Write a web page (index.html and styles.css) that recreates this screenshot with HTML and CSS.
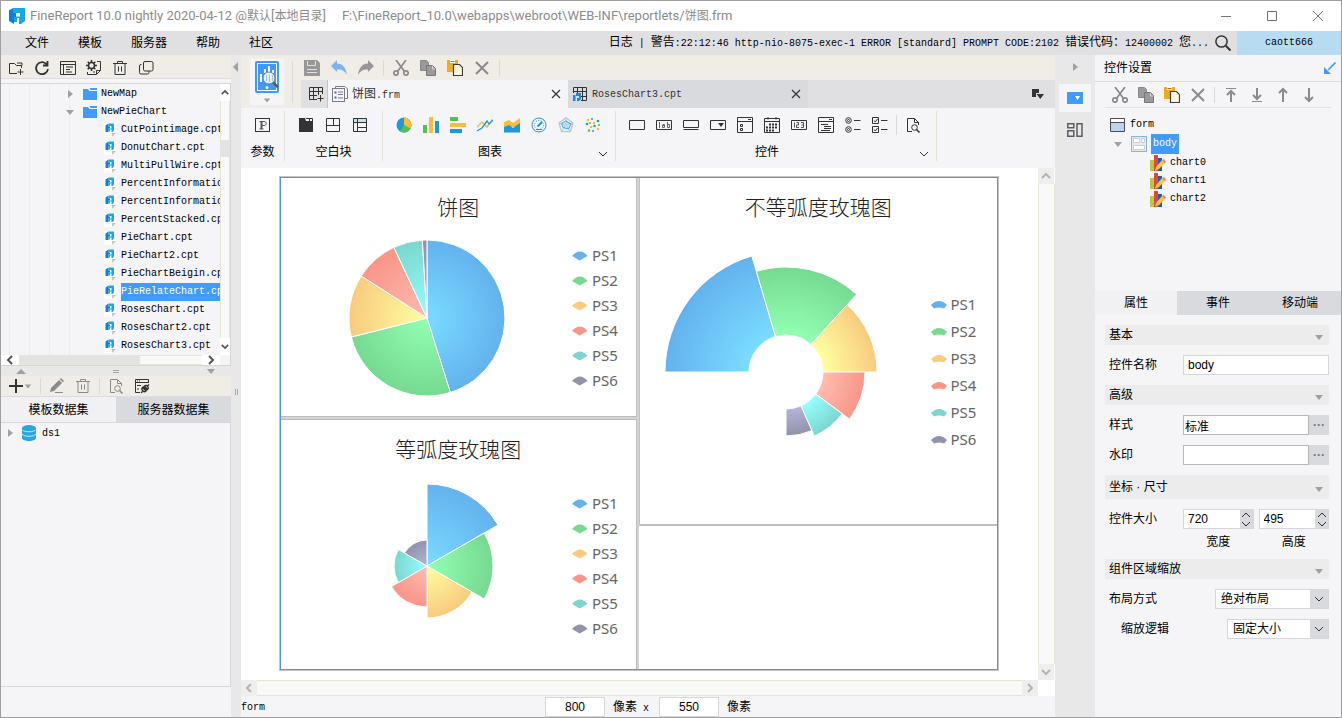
FILE: index.html
```html
<!DOCTYPE html>
<html lang="zh-CN">
<head>
  <meta charset="UTF-8" />
  <title>FineReport 10.0</title>
  <meta name="viewport" content="width=device-width, initial-scale=1" />
  <link rel="stylesheet" href="styles.css">
</head>
<body>
  <!-- icon sprite -->
  <svg class="sprite" aria-hidden="true">
    <symbol id="i-logo" viewBox="0 0 16 16"><g stroke="none"><path d="M0 2.500L4 0v5h3v4H5v7L0 13z" fill="#0d7fd6"/><path d="M4 0h12v13l-4 3h-2v-6H8v4H5V8.500h6V5H4z" fill="#16a9e6"/></g></symbol>
    <symbol id="i-folder-add" viewBox="0 0 16 16"><path d="M9 13.500H1.500v-10h5l2 2h5V8M9 3h5v2.500M12.500 9v6M9.500 12h6"/></symbol>
    <symbol id="i-refresh" viewBox="0 0 16 16"><path stroke-width="1.800" d="M12.800 4.500A6 6 0 1 0 14 9M13.500 1v4.500H9"/></symbol>
    <symbol id="i-listwin" viewBox="0 0 16 16"><path d="M.5 1.500h15v13H.5zM.5 4.500h15M3.500 4.500v10M6 7h7M6 9.500h4M6 12h6"/></symbol>
    <symbol id="i-gearpage" viewBox="0 0 16 16"><circle cx="5.500" cy="5.500" r="3" stroke-width="1.600"/><path stroke-width="1.600" d="M5.500 0v2M5.500 9v2M0 5.500h2M9 5.500h2M1.700 1.700l1.300 1.300M8 8l1.300 1.300M1.700 9.300L3 8M8 3l1.300-1.300"/><path d="M11 1.500h3.500v9M1.500 12v2.500H10M14.500 10.500h-4v4zM7 12h2"/></symbol>
    <symbol id="i-trash" viewBox="0 0 16 16"><path d="M1 3.500h14M5.500 3V1.500h5V3M3 3.500v11h10v-11M6.500 6.500v5M9.500 6.500v5"/></symbol>
    <symbol id="i-copy2" viewBox="0 0 16 16"><rect x="5.500" y="1.500" width="9.500" height="9.500" rx="1.500"/><path d="M3.500 4.500H3A1.500 1.500 0 0 0 1.500 6v6.500A1.500 1.500 0 0 0 3 14h6.500a1.500 1.500 0 0 0 1.500-1.500V11"/></symbol>
    <symbol id="i-plus" viewBox="0 0 16 16"><path stroke-width="2" d="M8 1v14M1 8h14"/></symbol>
    <symbol id="i-pencil" viewBox="0 0 16 16"><path fill="#8a8a8d" stroke="none" d="M1 14l1-4 8-8 3 3-8 8zM10.800 1.200L12 0l3 3-1.200 1.200z"/><path d="M6 14.500h8"/></symbol>
    <symbol id="i-pagesearch" viewBox="0 0 16 16"><path d="M7 14.500H2.500v-13h7l4 4V8M9.500 1.500v4h4"/><circle cx="9.500" cy="10.500" r="2.800"/><path stroke-width="1.600" d="M11.500 12.500l3 3"/></symbol>
    <symbol id="i-wintool" viewBox="0 0 16 16"><path d="M6 14.500H1.500v-13h13V5M1.500 4.500h13M3 3h1M5 3h1M3 7.500h4M3 11h2"/><path stroke-width="1.300" d="M9 8.500l4 4M8.500 9.500c-2 2 1.500 5.500 3.500 3.500zM10.500 8c2-2 5 1.500 3 3.500zM7 15l1.500-1.500M13.500 8L15 6.500"/></symbol>
    <symbol id="i-file" viewBox="0 0 12 16"><g stroke="none"><path fill="#fff" d="M0 1h12v10l-3 4H0z"/><path fill="#c4c4c8" d="M8 11h4l-4 4z"/><path fill="#0d7fd6" d="M1.500 3.500l3-2v3h1.500v2H4.500v3.500h-3z"/><path fill="#16a9e6" d="M4.500 1.500H10v7L8.500 10h-1V7.500H6v2H4.500V6.500h3V4h-3z"/></g></symbol>
    <symbol id="i-folder" viewBox="0 0 14 12"><path fill="#409bfb" stroke="none" d="M0 1h5l1.500 2H14v9H0zM6.500 0H14v2H7.500z"/></symbol>
    <symbol id="i-db" viewBox="0 0 14 16"><path fill="#29a5e3" stroke="none" d="M0 3v10c0 4 14 4 14 0V3z"/><ellipse cx="7" cy="3" rx="7" ry="3" fill="#29a5e3" stroke="none"/><path stroke="#c7e8f7" d="M0 4.500c1.500 3 12.500 3 14 0M0 9c1.500 3 12.500 3 14 0"/></symbol>
    <symbol id="i-save" viewBox="0 0 16 16"><path fill="#97979a" stroke="none" d="M0 0h13l3 3v13H0z"/><path stroke="#e2e0da" d="M3.500 1v4.500h8V1M3 9.500h10M3 12.500h10"/></symbol>
    <symbol id="i-undo" viewBox="0 0 16 16"><path fill="#7db4f0" stroke="none" d="M0 6l6-6v3.500c6 0 9 4.500 10 11.500-2-4-5-6-10-5.500V12z"/></symbol>
    <symbol id="i-redo" viewBox="0 0 16 16"><path fill="#97979a" stroke="none" d="M16 6l-6-6v3.500C4 3.500 1 8 0 15c2-4 5-6 10-5.500V12z"/></symbol>
    <symbol id="i-cut" viewBox="0 0 16 16"><g stroke="#8a8a8d" stroke-width="1.700"><circle cx="3" cy="13" r="2.200"/><circle cx="13" cy="13" r="2.200"/><path d="M3 0l8.500 11.500M13 0L4.500 11.500"/></g></symbol>
    <symbol id="i-copy" viewBox="0 0 16 16"><path fill="#9a9a9d" stroke="#88888b" d="M.5.500h6l2 2v8h-8z"/><path fill="#9a9a9d" stroke="#77777a" d="M6.500 5.500h6l3 3v7h-9z"/><path stroke="#d5d5d5" d="M12.500 6v3H15"/></symbol>
    <symbol id="i-paste" viewBox="0 0 16 16"><path fill="#f2ab1a" stroke="none" d="M0 0h11v5H6v7H0z"/><path fill="#fff" stroke="none" d="M3 0h5v3H3z"/><path stroke="#d65a1e" d="M3.500 1.500h4"/><path fill="#fff6dc" stroke="#3c3c40" stroke-width="1.200" d="M6.500 4.500h6l3 3v8h-9z"/></symbol>
    <symbol id="i-x" viewBox="0 0 16 16"><path stroke-width="2" d="M2 2l12 12M14 2L2 14"/></symbol>
    <symbol id="i-xs" viewBox="0 0 16 16"><path stroke-width="1.200" d="M4 4l8 8M12 4l-8 8"/></symbol>
    <symbol id="i-tableadd" viewBox="0 0 16 16"><path d="M14.500 8V1.500h-13v12H9M1.500 5.500h13M1.500 9.500H9M5.500 1.500v12M10.500 1.500V9M12.500 9v6.500M9.500 12.500h6"/></symbol>
    <symbol id="i-frm" viewBox="0 0 16 16"><g stroke="#7c7c80"><path d="M3.500 2.500v-2H13L15.500 3v9.500h-3"/><rect x=".5" y="2.500" width="12" height="13" fill="#f5f5f7"/><path d="M6 6h5M6 8.500h5M6 12h5"/></g><path fill="#2478c8" stroke="none" d="M2.500 5.500h2v2h-2zM2.500 10.500h2v2h-2z"/></symbol>
    <symbol id="i-cpt" viewBox="0 0 16 16"><path d="M1.500 7V1.500h13v13H9M1.500 5.500h13M9 10.500h5.500M5.500 1.500V7M10.500 1.500v13"/><path fill="#1a8ad8" stroke="none" d="M1 9h2.500v6H1zM4 7h5v6l-2 2H5v-3h2v-2H4z"/></symbol>
    <symbol id="i-tabmenu" viewBox="0 0 12 12"><path fill="#333" stroke="none" d="M0 1h7v4H4v4H0zM4.500 6H12l-3.700 5z"/></symbol>
    <symbol id="i-chev" viewBox="0 0 10 10"><path d="M1 3l4 4 4-4"/></symbol>
    <symbol id="i-chev-up" viewBox="0 0 10 10"><path d="M1 7l4-4 4 4"/></symbol>
    <symbol id="i-chev-left" viewBox="0 0 10 10"><path d="M7 1L3 5l4 4"/></symbol>
    <symbol id="i-chev-right" viewBox="0 0 10 10"><path d="M3 1l4 4-4 4"/></symbol>
    <symbol id="i-tri-down" viewBox="0 0 10 10"><path fill="#a0a0a3" stroke="none" d="M1 3h8L5 8z"/></symbol>
    <symbol id="i-tri-up" viewBox="0 0 10 10"><path fill="#a0a0a3" stroke="none" d="M0 8h10L5 3z"/></symbol>
    <symbol id="i-tri-right" viewBox="0 0 10 10"><path fill="#a0a0a3" stroke="none" d="M3 1v8l5-4z"/></symbol>
    <symbol id="i-tri-left" viewBox="0 0 10 10"><path fill="#a0a0a3" stroke="none" d="M7 0v10L2 5z"/></symbol>
    <symbol id="i-search" viewBox="0 0 16 16"><circle cx="6.500" cy="6.500" r="5.600" stroke-width="1.500"/><path stroke-width="2" d="M10.800 10.800l4.700 4.700"/></symbol>
    <symbol id="i-preview" viewBox="0 0 24 32"><rect width="24" height="32" rx="2" fill="#3f99fa" stroke="none"/><rect x="2.500" y="2.500" width="19" height="27" stroke="#fff"/><path stroke="#fff" stroke-width="2" d="M6 21v-8M10 12V8M14 11V5M18 12V9"/><circle cx="14" cy="17" r="6" fill="#e7f0f8" stroke="#707f8c"/><path stroke="#9cc6f2" d="M11.500 14v6M14.500 13v8M17.500 14v6"/><path stroke="#555" stroke-width="2.500" d="M18.500 21.500l4.500 5"/><circle cx="12" cy="26.500" r="1.500" fill="#fff" stroke="none"/></symbol>
    <!-- ribbon -->
    <symbol id="i-param" viewBox="0 0 16 16"><rect x=".5" y="1.500" width="14" height="13"/><path stroke="#555" d="M4.500 4.500h4.500c3 0 3 4 0 4H6.500M4.500 12h4"/><path stroke="#555" stroke-width="2" d="M6.500 4.500V12"/></symbol>
    <symbol id="i-block1" viewBox="0 0 16 16"><path fill="#333" stroke="none" d="M1 1h6l1 3h7v11H1z"/><path d="M8 1.500h6.500V5M11.500 1.500V4"/></symbol>
    <symbol id="i-block2" viewBox="0 0 16 16"><path d="M1.500 1.500h13v13h-13zM1.500 8.500h13M8.500 1.500v7"/></symbol>
    <symbol id="i-block3" viewBox="0 0 16 16"><path fill="#bfe4f7" stroke="none" d="M1 1h14v5H1z"/><path d="M1.500 1.500h13v13h-13zM1.500 5.500h13M5.500 1.500v13M5.500 10.500h9"/></symbol>
    <symbol id="i-c-pie" viewBox="0 0 16 16"><g stroke="none"><circle cx="8" cy="8" r="7.500" fill="#1f96e0"/><path fill="#f9bd3b" d="M8 8V.5A7.500 7.500 0 0 1 14.500 11.700z"/><path fill="#51c34e" d="M8 8l6.500 3.700A7.500 7.500 0 0 1 4 14.300z"/></g></symbol>
    <symbol id="i-c-bar" viewBox="0 0 16 16"><g stroke="none"><path fill="#51c34e" d="M0 8h4v8H0z"/><path fill="#f9bd3b" d="M6 0h4v16H6z"/><path fill="#1f96e0" d="M12 4h4v12h-4z"/></g></symbol>
    <symbol id="i-c-hbar" viewBox="0 0 16 16"><g stroke="none"><path fill="#51c34e" d="M0 0h8v4H0z"/><path fill="#f9bd3b" d="M0 6h16v4H0z"/><path fill="#1f96e0" d="M0 12h12v4H0z"/></g></symbol>
    <symbol id="i-c-line" viewBox="0 0 16 16"><path stroke="#f9bd3b" stroke-width="1.500" d="M0 10l5-5 5 5 5.500-7.500"/><path stroke="#1f96e0" stroke-width="1.300" d="M0 14l5-3 5-7 2 3 4-4"/></symbol>
    <symbol id="i-c-area" viewBox="0 0 16 16"><g stroke="none"><path fill="#f9bd3b" d="M0 5l5-2 4 3 7-5v9H0z"/><path fill="#1f96e0" d="M0 10l5-2 4 3 7-5v9.500H0z"/></g></symbol>
    <symbol id="i-c-gauge" viewBox="0 0 16 16"><g stroke="#1f96e0"><circle cx="8" cy="8" r="7"/><circle cx="8" cy="8" r="4.500" stroke-dasharray="1 1.500"/><path stroke-width="2" d="M6.500 9.500L11 5"/><path d="M5 12.500h6"/></g></symbol>
    <symbol id="i-c-radar" viewBox="0 0 16 16"><g stroke="#bcc6cd"><path stroke-width="1.300" d="M8 .8l7 5.200-2.600 8.500H3.600L1 6z"/><path d="M8 3.500L12 7M8 .8v7M1 6l7 2 7-2M3.600 14.500L8 8l4.400 6.500"/></g><path fill="#a6d8f5" fill-opacity=".6" stroke="#36a4e6" d="M7.500 4L13 7l-2.500 5L5 10.500 3.500 6.500z"/></symbol>
    <symbol id="i-c-scatter" viewBox="0 0 16 16"><g stroke="none"><g fill="#f9bd3b"><circle cx="3" cy="3" r="1.300"/><circle cx="9" cy="6" r="1.300"/><circle cx="6" cy="10" r="1.300"/><circle cx="13" cy="12" r="1.300"/></g><g fill="#1f96e0"><circle cx="7" cy="2" r="1"/><circle cx="13" cy="4" r="1.300"/><circle cx="9.500" cy="9" r="1.300"/><circle cx="2" cy="7" r="1.300"/><circle cx="8" cy="14" r="1"/></g><g fill="#51c34e"><circle cx="4" cy="13.500" r="1.300"/><circle cx="14" cy="8" r="1"/><circle cx="5" cy="6" r="1"/></g></g></symbol>
    <symbol id="i-w-text" viewBox="0 0 16 16"><path d="M.5 3.500h15v9H.5z"/></symbol>
    <symbol id="i-w-label" viewBox="0 0 16 16"><path d="M.5 3.500h15v9H.5z"/><path stroke="#666" d="M3.500 5v6M8.500 8.500h-2v2h2v-3h-2M11.500 5v5.500h2v-3h-2"/></symbol>
    <symbol id="i-w-button" viewBox="0 0 16 16"><path d="M.5 3.500h15v7H.5zM.5 12.500h15"/></symbol>
    <symbol id="i-w-combo" viewBox="0 0 16 16"><path d="M.5 3.500h15v9H.5z"/><path fill="#333" stroke="none" d="M8 6h6l-3 4z"/></symbol>
    <symbol id="i-w-checkcombo" viewBox="0 0 16 16"><path d="M.5.500h15v15H.5zM.5 4.500h15M3.500 7.500h2v2h-2zM3.500 11.500h2v2h-2zM11 2.500h3"/></symbol>
    <symbol id="i-w-date" viewBox="0 0 16 16"><path d="M.5 1.500h15v14H.5zM.5 4.500h15M4 0v2.500M12 0v2.500"/><path stroke-width="2" stroke-dasharray="2 1" d="M5 7.500h8M2 10.500h11M2 13.500h8"/></symbol>
    <symbol id="i-w-num" viewBox="0 0 16 16"><path d="M.5 3.500h15v9H.5z"/><path stroke="#555" d="M3.500 5.500v5M5.500 5.500h2V8h-2v2.500H8M10 5.500h2.500v5H10M10.500 8H13"/></symbol>
    <symbol id="i-w-tree" viewBox="0 0 16 16"><path d="M.5.500h15v15H.5zM.5 4.500h15M3 7.500h7M6 9.500h7M6 11.500h7M3 13.500h9M11 2.500h3"/></symbol>
    <symbol id="i-w-radio" viewBox="0 0 16 16"><circle cx="3.500" cy="3.500" r="2.800"/><circle cx="3.500" cy="12.500" r="2.800"/><circle cx="3.500" cy="3.500" r="1"/><circle cx="3.500" cy="12.500" r="1"/><path d="M9 3.500h6.500M9 12.500h6.500"/></symbol>
    <symbol id="i-w-check" viewBox="0 0 16 16"><path d="M.5.500h6v6h-6zM.5 9.500h6v6h-6zM2 3.500l1.300 1.500L5.500 2M2 12.500L3.300 14l2.200-3M9 3.500h6.500M9 12.500h6.500"/></symbol>
    <!-- right side -->
    <symbol id="i-props" viewBox="0 0 16 12"><path fill="#409bfb" stroke="none" d="M0 0h16v12H0z"/><path fill="#fff" stroke="none" d="M8 4h5l-2.500 4z"/></symbol>
    <symbol id="i-lib" viewBox="0 0 16 14"><path stroke="#5c5c66" stroke-width="1.500" d="M.8.800h6v4h-6zM.8 7.800h6v5.400h-6zM10 .8h5v12.400h-5z"/></symbol>
    <symbol id="i-popin" viewBox="0 0 12 12"><path stroke="#409bfb" stroke-width="1.600" d="M11.500.5L4 8"/><path fill="#409bfb" stroke="none" d="M0 5l7 7H0z"/></symbol>
    <symbol id="i-top" viewBox="0 0 16 16"><path stroke="#8a8a8d" d="M3 1.500h10"/><path stroke="#8a8a8d" stroke-width="2" d="M8 15V4M4 8l4-4 4 4"/></symbol>
    <symbol id="i-bottom" viewBox="0 0 16 16"><path stroke="#8a8a8d" d="M3 14.500h10"/><path stroke="#8a8a8d" stroke-width="2" d="M8 1v11M4 8l4 4 4-4"/></symbol>
    <symbol id="i-up" viewBox="0 0 16 16"><path stroke="#8a8a8d" stroke-width="2" d="M8 15V2M4 6l4-4 4 4"/></symbol>
    <symbol id="i-down" viewBox="0 0 16 16"><path stroke="#8a8a8d" stroke-width="2" d="M8 1v13M4 10l4 4 4-4"/></symbol>
    <symbol id="i-form" viewBox="0 0 16 16"><path fill="#bcd3f2" stroke="#4c4c55" d="M.5 1.500h14v13H.5z"/><path fill="#fff" stroke="#4c4c55" d="M.5 1.500h14v4H.5z"/></symbol>
    <symbol id="i-body" viewBox="0 0 16 16"><path fill="#e9e9ec" stroke="#84b4d4" d="M.5.500h15v15H.5z"/><path fill="#fff" stroke="#cfcfd2" d="M2.500 2.500h6v4h-6zM10.500 2.500h3v4h-3zM2.500 9.500h11v4h-11z"/></symbol>
    <symbol id="i-chart" viewBox="0 0 16 16"><g stroke="none"><path fill="#b2cc4a" d="M0 5h4v11H0z"/><path fill="#ea4138" d="M4 0h4v16H4z"/><path fill="#0f66a8" d="M8 3h4v13H8z"/><path fill="#fbc252" d="M6 12l6-7 3 3-6 6-4 2z"/><path fill="#ec7b5b" d="M12 5l2-1 2 3-1.500 1z"/></g></symbol>
    <!-- legend marks -->
    <symbol id="i-fan" viewBox="0 0 16 10"><path stroke="none" d="M0 5Q8-4 15.500 5L7.700 9.500z"/></symbol>
    <symbol id="i-arc" viewBox="0 0 16 10"><path stroke="none" d="M0 5Q8-3 16 5l-3 3.500Q8 6.500 3 8.500z"/></symbol>
  </svg>

  <div class="window">
    <header class="titlebar">
      <svg class="icon logo"><use href="#i-logo"/></svg>
      <span class="title">FineReport 10.0 nightly 2020-04-12 @<span class="zh">默认</span>[<span class="zh">本地目录</span>]</span>
      <span class="path">F:\FineReport_10.0\webapps\webroot\WEB-INF\reportlets/<span class="zh">饼图</span>.frm</span>
      <div class="win-buttons">
        <button aria-label="最小化"><svg viewBox="0 0 10 10"><path d="M0 5.500h10"/></svg></button>
        <button aria-label="最大化"><svg viewBox="0 0 10 10"><path d="M.5.500h9v9h-9z"/></svg></button>
        <button aria-label="关闭"><svg viewBox="0 0 10 10"><path d="M0 0l10 10M10 0L0 10"/></svg></button>
      </div>
    </header>

    <nav class="menubar">
      <button>文件</button>
      <button>模板</button>
      <button>服务器</button>
      <button>帮助</button>
      <button>社区</button>
      <span class="log mono"><span class="zh">日志</span> | <span class="zh">警告</span>:22:12:46 http-nio-8075-exec-1 ERROR [standard] PROMPT CODE:2102 <span class="zh">错误代码：</span>12400002 <span class="zh">您</span>...</span>
      <button class="search" aria-label="搜索"><svg class="icon"><use href="#i-search"/></svg></button>
      <button class="user mono">caott666</button>
    </nav>

    <div class="main">
      <aside class="left">
        <div class="toolbar files-toolbar">
          <button aria-label="新建文件夹"><svg class="icon"><use href="#i-folder-add"/></svg></button>
          <button aria-label="刷新"><svg class="icon"><use href="#i-refresh"/></svg></button>
          <button aria-label="打开所在位置"><svg class="icon"><use href="#i-listwin"/></svg></button>
          <button aria-label="重命名"><svg class="icon"><use href="#i-gearpage"/></svg></button>
          <button aria-label="删除"><svg class="icon"><use href="#i-trash"/></svg></button>
          <button aria-label="复制"><svg class="icon"><use href="#i-copy2"/></svg></button>
        </div>
        <div class="files">
          <ul class="tree mono">
            <li class="folder"><svg class="tri"><use href="#i-tri-right"/></svg><svg class="ficon"><use href="#i-folder"/></svg>NewMap</li>
            <li class="folder"><svg class="tri"><use href="#i-tri-down"/></svg><svg class="ficon"><use href="#i-folder"/></svg>NewPieChart</li>
            <li><svg class="file"><use href="#i-file"/></svg><span>CutPointimage.cpt</span></li>
            <li><svg class="file"><use href="#i-file"/></svg><span>DonutChart.cpt</span></li>
            <li><svg class="file"><use href="#i-file"/></svg><span>MultiPullWire.cpt</span></li>
            <li><svg class="file"><use href="#i-file"/></svg><span>PercentInformation.cpt</span></li>
            <li><svg class="file"><use href="#i-file"/></svg><span>PercentInformation2.cpt</span></li>
            <li><svg class="file"><use href="#i-file"/></svg><span>PercentStacked.cpt</span></li>
            <li><svg class="file"><use href="#i-file"/></svg><span>PieChart.cpt</span></li>
            <li><svg class="file"><use href="#i-file"/></svg><span>PieChart2.cpt</span></li>
            <li><svg class="file"><use href="#i-file"/></svg><span>PieChartBeigin.cpt</span></li>
            <li class="selected"><svg class="file"><use href="#i-file"/></svg><span>PieRelateChart.cpt</span></li>
            <li><svg class="file"><use href="#i-file"/></svg><span>RosesChart.cpt</span></li>
            <li><svg class="file"><use href="#i-file"/></svg><span>RosesChart2.cpt</span></li>
            <li><svg class="file"><use href="#i-file"/></svg><span>RosesChart3.cpt</span></li>
          </ul>
          <div class="vbar small">
            <svg class="arrow"><use href="#i-chev-up"/></svg>
            <div class="track"><div class="thumb"></div></div>
            <svg class="arrow"><use href="#i-chev"/></svg>
          </div>
          <div class="hbar small">
            <svg class="arrow"><use href="#i-chev-left"/></svg>
            <div class="track"><div class="thumb"></div></div>
            <svg class="arrow"><use href="#i-chev-right"/></svg>
          </div>
        </div>
        <div class="hsplit">
          <svg class="tri"><use href="#i-tri-up"/></svg>
          <span class="grip"></span>
          <svg class="tri"><use href="#i-tri-down"/></svg>
        </div>
        <div class="toolbar data-toolbar">
          <button class="add" aria-label="新增"><svg class="icon"><use href="#i-plus"/></svg><svg class="tri"><use href="#i-tri-down"/></svg></button>
          <i class="sep"></i>
          <button class="off" aria-label="编辑"><svg class="icon"><use href="#i-pencil"/></svg></button>
          <button class="off" aria-label="删除"><svg class="icon"><use href="#i-trash"/></svg></button>
          <i class="sep"></i>
          <button class="off" aria-label="预览"><svg class="icon"><use href="#i-pagesearch"/></svg></button>
          <button aria-label="连接"><svg class="icon"><use href="#i-wintool"/></svg></button>
        </div>
        <div class="tabs data-tabs">
          <button class="active">模板数据集</button>
          <button>服务器数据集</button>
        </div>
        <div class="datasets mono">
          <svg class="tri"><use href="#i-tri-right"/></svg><svg class="db"><use href="#i-db"/></svg>ds1
        </div>
      </aside>

      <div class="vsplit">
        <svg class="tri"><use href="#i-tri-left"/></svg>
        <span class="grip"></span>
      </div>

      <main class="center">
        <div class="top">
          <button class="preview" aria-label="预览"><svg class="big"><use href="#i-preview"/></svg><svg class="tri"><use href="#i-tri-down"/></svg></button>
          <i class="sep tall"></i>
          <div class="top-rows">
            <div class="edit-bar">
              <button aria-label="保存"><svg class="icon"><use href="#i-save"/></svg></button>
              <button aria-label="撤销"><svg class="icon"><use href="#i-undo"/></svg></button>
              <button aria-label="重做"><svg class="icon"><use href="#i-redo"/></svg></button>
              <i class="sep"></i>
              <button aria-label="剪切"><svg class="icon"><use href="#i-cut"/></svg></button>
              <button aria-label="复制"><svg class="icon"><use href="#i-copy"/></svg></button>
              <button aria-label="粘贴"><svg class="icon"><use href="#i-paste"/></svg></button>
              <button class="off" aria-label="删除"><svg class="icon"><use href="#i-x"/></svg></button>
              <i class="sep"></i>
            </div>
            <div class="doc-tabs">
              <button class="new" aria-label="新建"><svg class="icon"><use href="#i-tableadd"/></svg></button>
              <div class="doc active mono"><svg class="icon"><use href="#i-frm"/></svg><span><span class="zh">饼图</span>.frm</span><button aria-label="关闭"><svg class="icon"><use href="#i-xs"/></svg></button></div>
              <div class="doc mono"><svg class="icon"><use href="#i-cpt"/></svg><span>RosesChart3.cpt</span><button aria-label="关闭"><svg class="icon"><use href="#i-xs"/></svg></button></div>
              <button class="more" aria-label="更多"><svg><use href="#i-tabmenu"/></svg></button>
            </div>
          </div>
        </div>

        <div class="ribbon">
          <section class="g-param">
            <div class="tools"><button aria-label="参数"><svg class="icon"><use href="#i-param"/></svg></button></div>
            <span class="label">参数</span>
          </section>
          <section class="g-block">
            <div class="tools">
              <button aria-label="Tab块"><svg class="icon"><use href="#i-block1"/></svg></button>
              <button aria-label="绝对画布块"><svg class="icon"><use href="#i-block2"/></svg></button>
              <button aria-label="报表块"><svg class="icon"><use href="#i-block3"/></svg></button>
            </div>
            <span class="label">空白块</span>
          </section>
          <section class="g-chart">
            <div class="tools">
              <button aria-label="饼图"><svg class="icon"><use href="#i-c-pie"/></svg></button>
              <button aria-label="柱形图"><svg class="icon"><use href="#i-c-bar"/></svg></button>
              <button aria-label="条形图"><svg class="icon"><use href="#i-c-hbar"/></svg></button>
              <button aria-label="折线图"><svg class="icon"><use href="#i-c-line"/></svg></button>
              <button aria-label="面积图"><svg class="icon"><use href="#i-c-area"/></svg></button>
              <button aria-label="仪表盘"><svg class="icon"><use href="#i-c-gauge"/></svg></button>
              <button aria-label="雷达图"><svg class="icon"><use href="#i-c-radar"/></svg></button>
              <button aria-label="散点图"><svg class="icon"><use href="#i-c-scatter"/></svg></button>
            </div>
            <span class="label">图表</span>
            <svg class="expand"><use href="#i-chev"/></svg>
          </section>
          <section class="g-widget">
            <div class="tools">
              <button aria-label="文本"><svg class="icon"><use href="#i-w-text"/></svg></button>
              <button aria-label="标签"><svg class="icon"><use href="#i-w-label"/></svg></button>
              <button aria-label="按钮"><svg class="icon"><use href="#i-w-button"/></svg></button>
              <button aria-label="下拉框"><svg class="icon"><use href="#i-w-combo"/></svg></button>
              <button aria-label="下拉复选框"><svg class="icon"><use href="#i-w-checkcombo"/></svg></button>
              <button aria-label="日期"><svg class="icon"><use href="#i-w-date"/></svg></button>
              <button aria-label="数字"><svg class="icon"><use href="#i-w-num"/></svg></button>
              <button aria-label="下拉树"><svg class="icon"><use href="#i-w-tree"/></svg></button>
              <button aria-label="单选按钮组"><svg class="icon"><use href="#i-w-radio"/></svg></button>
              <button aria-label="复选框组"><svg class="icon"><use href="#i-w-check"/></svg></button>
              <i class="sep"></i>
              <button aria-label="查询"><svg class="icon"><use href="#i-pagesearch"/></svg></button>
            </div>
            <span class="label">控件</span>
            <svg class="expand"><use href="#i-chev"/></svg>
          </section>
        </div>

        <div class="workspace">
          <div class="canvas">
            <div class="form">
              <div class="col">
                <article class="chart">
                  <h2>饼图</h2>
                  <div class="plot"><svg class="pie" data-chart="pie" viewBox="-146 -85 291 170"></svg><ul class="legend" data-mark="fan"></ul></div>
                </article>
                <article class="chart">
                  <h2>等弧度玫瑰图</h2>
                  <div class="plot"><svg class="pie" data-chart="rose" viewBox="-146 -85 291 170"></svg><ul class="legend" data-mark="fan"></ul></div>
                </article>
              </div>
              <div class="col">
                <article class="chart wide">
                  <h2>不等弧度玫瑰图</h2>
                  <div class="plot"><svg class="pie" data-chart="donut" viewBox="-146 -125 291 250"></svg><ul class="legend" data-mark="arc"></ul></div>
                </article>
              </div>
            </div>
          </div>
          <div class="vbar">
            <svg class="arrow"><use href="#i-chev-up"/></svg>
            <div class="track"></div>
            <svg class="arrow"><use href="#i-chev"/></svg>
          </div>
          <div class="hbar">
            <svg class="arrow"><use href="#i-chev-left"/></svg>
            <div class="track"></div>
            <svg class="arrow"><use href="#i-chev-right"/></svg>
          </div>
        </div>

        <footer class="status mono">
          <span class="name">form</span>
          <input id="form-w" type="text" value="800" aria-label="宽"><label for="form-w"><span class="zh">像素</span> x</label>
          <input id="form-h" type="text" value="550" aria-label="高"><label for="form-h"><span class="zh">像素</span></label>
        </footer>
      </main>

      <div class="strip">
        <svg class="tri"><use href="#i-tri-right"/></svg>
        <button class="active" aria-label="控件设置"><svg width="16" height="12"><use href="#i-props"/></svg></button>
        <button aria-label="组件库"><svg width="16" height="14"><use href="#i-lib"/></svg></button>
      </div>

      <aside class="right">
        <div class="panel-head">控件设置<svg><use href="#i-popin"/></svg></div>
        <div class="panel-tools">
          <button aria-label="剪切"><svg class="icon"><use href="#i-cut"/></svg></button>
          <button aria-label="复制"><svg class="icon"><use href="#i-copy"/></svg></button>
          <button aria-label="粘贴"><svg class="icon"><use href="#i-paste"/></svg></button>
          <button class="off" aria-label="删除"><svg class="icon"><use href="#i-x"/></svg></button>
          <i class="sep"></i>
          <button aria-label="置顶"><svg class="icon"><use href="#i-top"/></svg></button>
          <button aria-label="置底"><svg class="icon"><use href="#i-bottom"/></svg></button>
          <button aria-label="上移"><svg class="icon"><use href="#i-up"/></svg></button>
          <button aria-label="下移"><svg class="icon"><use href="#i-down"/></svg></button>
        </div>
        <ul class="widgets mono">
          <li><svg class="icon"><use href="#i-form"/></svg><span>form</span></li>
          <li class="level1 selected"><svg class="tri"><use href="#i-tri-down"/></svg><svg class="icon"><use href="#i-body"/></svg><span>body</span></li>
          <li class="level2"><svg class="icon"><use href="#i-chart"/></svg><span>chart0</span></li>
          <li class="level2"><svg class="icon"><use href="#i-chart"/></svg><span>chart1</span></li>
          <li class="level2"><svg class="icon"><use href="#i-chart"/></svg><span>chart2</span></li>
        </ul>
        <div class="tabs prop-tabs">
          <button class="active">属性</button>
          <button>事件</button>
          <button>移动端</button>
        </div>
        <div class="props">
          <h3>基本<svg class="tri"><use href="#i-tri-down"/></svg></h3>
          <div class="row"><label for="p-name">控件名称</label><input id="p-name" class="value" type="text" value="body"></div>
          <h3>高级<svg class="tri"><use href="#i-tri-down"/></svg></h3>
          <div class="row"><label for="p-style">样式</label><div class="value picker"><input id="p-style" type="text" value="标准"><button aria-label="选择样式">···</button></div></div>
          <div class="row"><label for="p-mark">水印</label><div class="value picker"><input id="p-mark" type="text"><button aria-label="选择水印">···</button></div></div>
          <h3 class="high">坐标 · 尺寸<svg class="tri"><use href="#i-tri-down"/></svg></h3>
          <div class="row"><span>控件大小</span>
            <div class="value sizes">
              <div class="spin"><input id="p-w" type="text" value="720"><div class="steps"><button aria-label="增加宽度"><svg><use href="#i-chev-up"/></svg></button><button aria-label="减少宽度"><svg><use href="#i-chev"/></svg></button></div></div>
              <div class="spin"><input id="p-h" type="text" value="495"><div class="steps"><button aria-label="增加高度"><svg><use href="#i-chev-up"/></svg></button><button aria-label="减少高度"><svg><use href="#i-chev"/></svg></button></div></div>
            </div>
          </div>
          <div class="row captions"><div class="value sizes"><label for="p-w">宽度</label><label for="p-h">高度</label></div></div>
          <h3>组件区域缩放<svg class="tri"><use href="#i-tri-down"/></svg></h3>
          <div class="row"><label for="p-layout">布局方式</label><div class="select"><select id="p-layout"><option>绝对布局</option></select><svg><use href="#i-chev"/></svg></div></div>
          <div class="row sub"><label for="p-scale">缩放逻辑</label><div class="select"><select id="p-scale"><option>固定大小</option></select><svg><use href="#i-chev"/></svg></div></div>
        </div>
      </aside>
    </div>
  </div>

  <script src="charts.js"></script>
</body>
</html>
```

FILE: styles.css
```css
* { box-sizing: border-box; }
body {
  margin: 0;
  background: #f5f5f7;
  color: #000;
  font: 12px/18px "Liberation Sans", "Noto Sans CJK SC", sans-serif;
}
button, input, select { font: inherit; color: inherit; margin: 0; padding: 0; border: 0; background: none; border-radius: 0; }
button { display: flex; align-items: center; justify-content: center; cursor: pointer; }
ul { list-style: none; margin: 0; padding: 0; }
h2, h3 { margin: 0; font-weight: normal; }
svg { display: block; flex: none; fill: none; stroke: #333; }
.sprite { position: absolute; width: 0; height: 0; }
.icon { width: 16px; height: 16px; }
.tri { width: 10px; height: 10px; }
.mono { font-family: "Liberation Mono", "Noto Sans CJK SC", monospace; font-size: 10px; }
.zh { font-size: 12px; }
.off svg { stroke: #8a8a8d; }
.sep { flex: none; width: 1px; height: 16px; background: #d9d9dc; }

.window { height: 100vh; display: flex; flex-direction: column; border: 1px solid #a0a0a2; overflow: hidden; }

/* title + menu */
.titlebar { flex: none; height: 30px; display: flex; align-items: center; background: #fff; color: #8c8c8c; padding-left: 8px; font: 13px/18px Roboto, "Noto Sans CJK SC", sans-serif; }
.logo { margin-right: 5px; }
.path { margin-left: 16px; }
.win-buttons { margin-left: auto; display: flex; }
.win-buttons button { width: 46px; height: 30px; }
.win-buttons svg { width: 10px; height: 10px; stroke: #777; }
.menubar { flex: none; height: 24px; display: flex; align-items: stretch; background: #e0e0e3; padding-left: 10px; }
.menubar > button { padding: 0 14px; }
.menubar > button + button { margin-left: 1px; }
.log { margin-left: auto; line-height: 24px; white-space: pre; }
.menubar > .search { padding: 0 6px; margin: 0; }
.menubar > .user { width: 104px; margin: 0; background: #b7dcf2; }

.main { flex: 1; min-height: 0; display: flex; }

/* left panel */
.left { flex: none; width: 230px; display: flex; flex-direction: column; }
.toolbar { flex: none; display: flex; align-items: center; background: #f0ede6; border-bottom: 1px solid #dcdce0; }
.files-toolbar { height: 24px; padding: 2px 7px 0; gap: 10px; margin-bottom: 4px; }
.files { flex: none; height: 283px; display: grid; grid-template: 1fr 10px / 1fr 10px; border: 1px solid #d6d6da; border-left: 0; overflow: hidden; }
.tree { min-width: 0; overflow: hidden; padding-top: 1px; background: repeating-linear-gradient(90deg, transparent 0 8px, #ececef 8px 9px, transparent 9px 20px) 0 0 / 80px 100% no-repeat; }
.tree li { height: 18px; padding-left: 103px; display: flex; align-items: center; white-space: nowrap; }
.tree .folder { padding-left: 64px; }
.tree .folder .tri { margin-right: 8px; }
.ficon { width: 14px; height: 12px; margin-right: 4px; }
.file { width: 12px; height: 16px; margin-right: 5px; }
.selected span { background: #409bfb; color: #fff; }
.vbar, .hbar { display: flex; }
.vbar { flex-direction: column; }
.hbar { grid-row: 2; }
.track { flex: 1; background: #f9f9f7; border: 0 solid #e8e4d4; }
.vbar .track { border-width: 0 1px; }
.hbar .track { border-width: 1px 0; }
.arrow { width: 16px; height: 16px; padding: 3px; background: #eeeeec; stroke: #b4b4b4; stroke-width: 2; }
.small .arrow { width: 10px; height: 17px; padding: 0 1px; background: #fff; stroke: #555; }
.hbar.small .arrow { width: 18px; height: 10px; }
.vbar .thumb { height: 17px; margin-top: 39px; background: #e3e3e3; }
.hbar .thumb { height: 8px; width: 66%; background: #e3e3e3; }
.hsplit { flex: none; height: 10px; display: flex; align-items: center; justify-content: space-between; padding: 0 15px; background: #e8e8e8; }
.hsplit .grip { width: 6px; height: 3px; border: 1px solid #a8a8a8; border-width: 1px 0; }
.data-toolbar { height: 21px; padding-left: 7px; gap: 10px; }
.data-toolbar .add .tri { width: 8px; }
.data-toolbar .sep, .panel-tools .sep { margin: 0 -2px; }
.tabs { flex: none; display: flex; background: #d9dadd; }
.tabs button { flex: 1; }
.tabs .active { background: #f1f1f4; }
.data-tabs { height: 25px; }
.datasets { flex: none; height: 265px; display: flex; align-items: flex-start; padding: 1px 4px; line-height: 20px; border: 1px solid #d6d6da; border-left: 0; }
.datasets .tri { margin: 4px 7px 0 0; }
.db { width: 14px; height: 16px; margin: 1px 6px 0 0; }
.vsplit { flex: none; width: 10px; background: #e8e8e8; display: flex; flex-direction: column; align-items: center; justify-content: space-between; padding: 7px 0 322px; }
.vsplit .grip { width: 3px; height: 6px; border: 1px solid #a8a8a8; border-width: 0 1px; }

/* center */
.center { flex: 1; min-width: 0; display: flex; flex-direction: column; }
.top { flex: none; height: 53px; display: flex; background: #f0ede6; }
.preview { flex-direction: column; width: 34px; height: 46px; margin: 4px 8px 0 9px; background: #f5f5f7; }
.big { width: 24px; height: 32px; }
.preview .tri { width: 8px; height: 8px; margin-top: 3px; }
.tall { height: 42px; margin-top: 6px; }
.top-rows { flex: 1; min-width: 0; margin-left: 8px; display: flex; flex-direction: column; }
.edit-bar { height: 25px; display: flex; align-items: center; gap: 11px; padding-left: 3px; }
.edit-bar .sep { margin: 0 -2px; }
.doc-tabs { flex: 1; display: flex; background: #e0e0e3; }
.new { width: 27px; padding-left: 3px; border-right: 1px solid #c4c4c8; }
.doc { display: flex; align-items: center; gap: 4px; width: 240px; padding: 0 4px; color: #333; background: #d9dadd; }
.doc > span { padding-top: 2px; }
.doc button { margin-left: auto; }
.doc.active { background: #f5f5f7; }
.more { margin-left: auto; padding: 0 11px; }
.more svg { width: 12px; height: 12px; }
.ribbon { flex: none; height: 60px; display: flex; padding-top: 3px; background: #f5f5f7; }
.ribbon section { display: grid; grid-template: 27px 1fr / 1fr 36px; height: 50px; border-right: 1px solid #e3e1da; }
.tools { grid-column: 1 / -1; display: flex; align-items: center; gap: 11px; }
.ribbon .label { align-self: end; text-align: center; grid-column: 1 / -1; grid-row: 2; }
.ribbon .g-chart .label, .ribbon .g-widget .label { padding-right: 18px; }
.expand { width: 10px; height: 10px; grid-column: 2; grid-row: 2; align-self: end; justify-self: end; margin: 0 7px 2px 0; }
.ribbon .g-param { width: 44px; }
.g-param .tools { justify-content: center; }
.ribbon .g-block { width: 98px; }
.ribbon .g-chart { width: 233px; }
.ribbon .g-widget { width: 321px; }
.g-block .tools, .g-chart .tools, .g-widget .tools { padding-left: 13px; }
.g-widget .sep { height: 20px; margin: 0 -3px; }

.workspace { flex: 1; min-height: 0; display: grid; grid-template: 1fr 16px / 1fr 17px; background: #fff; }
.canvas { padding: 9px 40px 0 39px; min-width: 0; overflow: hidden; }
.form { height: 493px; display: grid; grid-template-columns: 356fr 359fr; gap: 2px; outline: 1px solid #c4c4c4; border: 1px solid #4798ee; background: #fff; }
.col { display: flex; flex-direction: column; gap: 2px; }
.col:first-child { background: #d3d3d3; box-shadow: 2px 0 #d3d3d3; }
.chart { height: 239px; padding-top: 15px; background: #fff; border: 1px solid #bdbdbd; border-width: 0 1px 1px 0; }
.chart + .chart { flex: 1; border-width: 1px 1px 0 0; }
.chart.wide { height: 348px; border-width: 0 0 2px 1px; border-color: #c0c0c0; }
.chart h2 { text-align: center; font: 21px/26px "Noto Sans CJK SC", sans-serif; font-weight: 300; color: #222; }
.plot { display: flex; align-items: center; margin-top: 14px; }
.chart + .chart .plot { margin-top: 20px; }
.wide .plot { margin-top: 28px; }
.pie { width: 291px; height: 170px; }
.wide .pie { height: 250px; }
.pie path { stroke: #fff; stroke-width: 1; }
.legend { font: 15px/25px "Noto Sans", "Noto Sans CJK SC", sans-serif; color: #666; }
.wide .legend { line-height: 27px; }
.legend li { display: flex; align-items: center; gap: 4px; }
.legend svg { width: 16px; height: 10px; }

.status { flex: none; height: 21px; display: flex; align-items: center; background: #f5f5f7; white-space: pre; }
.status .name { width: 304px; padding-top: 2px; }
.status input { width: 60px; height: 20px; background: #fff; border: 1px solid #d6d6da; text-align: center; font: 12px/18px "Liberation Sans", sans-serif; }
.status label { width: 54px; padding: 3px 0 0 8px; }

/* icon strip */
.strip { flex: none; width: 40px; display: flex; flex-direction: column; align-items: center; background: #e8e8e8; padding-top: 7px; }
.strip .tri { margin-bottom: 12px; }
.strip button { width: 32px; height: 28px; margin-bottom: 4px; }
.strip .active { background: #f5f5f7; }

/* right panel */
.right { flex: none; width: 246px; }
.panel-head { height: 27px; padding: 0 5px 0 9px; line-height: 27px; display: flex; align-items: center; justify-content: space-between; border-bottom: 1px solid #d9d9dc; }
.panel-head svg { width: 12px; height: 12px; }
.panel-tools { display: flex; align-items: center; gap: 10px; height: 26px; margin: 0 10px; padding-left: 7px; border-bottom: 1px solid #e3e3e6; }
.widgets { height: 183px; padding: 7px 15px; }
.widgets li { display: flex; align-items: center; height: 18px; }
.widgets .icon { margin-right: 4px; }
.widgets .level1 { height: 20px; padding-left: 3px; }
.widgets .level1 .tri { margin-right: 8px; }
.widgets .level2 { padding-left: 40px; }
.widgets li:first-child { height: 19px; }
.widgets .selected span { padding: 0 2px; line-height: 20px; }
.prop-tabs { height: 24px; }
.props { padding: 10px 12px 0 10px; display: grid; gap: 10px; }
.props h3 { height: 20px; padding: 0 5px 0 4px; display: flex; align-items: center; justify-content: space-between; font-size: 12px; background: #ececec; }
.props .high { height: 24px; }
.props h3 .tri { margin-top: 4px; }
.row { display: flex; align-items: center; justify-content: space-between; height: 20px; padding-left: 4px; }
.row.sub { padding-left: 16px; }
.row.captions { margin: -6px 0 -4px; justify-content: flex-end; }
.value { width: 146px; height: 20px; }
.row input, .select { background: #fff; border: 1px solid #d6d6da; }
.row input { min-width: 0; padding: 0 4px; }
.picker { display: flex; }
.picker input { flex: 1; height: 20px; padding: 0 1px; border-color: #b9b9bc; }
.picker button { width: 20px; background: #d9dadd; color: #777; font-weight: bold; }
.sizes { display: grid; grid-template-columns: 1fr 1fr; gap: 5px; text-align: center; }
.spin { display: flex; border: 1px solid #d6d6da; }
.row .spin input { flex: 1; width: 0; border: 0; height: 18px; }
.steps { width: 13px; background: #d9dadd; }
.steps button { width: 13px; height: 9px; }
.steps svg { width: 10px; height: 10px; }
.row .select { width: 114px; height: 20px; display: flex; align-items: center; background: #d9dadd; }
.sub .select { width: 102px; }
.row.sub .select { width: 102px; }
.select select { appearance: none; flex: 1; height: 18px; padding-left: 5px; background: #fff; }
.select svg { width: 10px; height: 10px; margin: 0 4px; }
```

FILE: charts.js
```js
const COLORS = [
  ['#7adcff', '#63b2ee'],
  ['#92ffb2', '#76da91'],
  ['#ffffa0', '#f8cb7f'],
  ['#ffbcb0', '#f89588'],
  ['#94ffff', '#7cd6cf'],
  ['#b4b4d8', '#9192ab']
];

// angles in degrees, clockwise from 12 o'clock
const CHARTS = {
  pie: { inner: 0, angles: [0, 162.6, 255.9, 302.6, 334.9, 356.6, 360], radii: [78, 78, 78, 78, 78, 78] },
  rose: { inner: 0, angles: [0, 60, 120, 180, 240, 300, 360], radii: [82, 66, 52, 41, 33, 26] },
  donut: { inner: 37, angles: [270, 343.6, 402.3, 450, 486.6, 516.2, 540], radii: [121, 105, 91, 79, 70, 64] }
};

function point(r, deg) {
  const a = deg * Math.PI / 180;
  return (r * Math.sin(a)).toFixed(2) + ' ' + (-r * Math.cos(a)).toFixed(2);
}

function sector(r0, r1, a0, a1) {
  const outer = `M${point(r1, a0)}A${r1} ${r1} 0 0 1 ${point(r1, a1)}`;
  if (!r0) return outer + 'L0 0Z';
  return `${outer}L${point(r0, a1)}A${r0} ${r0} 0 0 0 ${point(r0, a0)}Z`;
}

document.querySelectorAll('[data-chart]').forEach(svg => {
  const name = svg.dataset.chart;
  const { inner, angles, radii } = CHARTS[name];
  svg.innerHTML = radii.map((r, i) => `
    <radialGradient id="${name}${i}" gradientUnits="userSpaceOnUse" cx="0" cy="0" r="${r}">
      <stop offset="${inner / r}" stop-color="${COLORS[i][0]}"/><stop offset="1" stop-color="${COLORS[i][1]}"/>
    </radialGradient>
    <path fill="url(#${name}${i})" d="${sector(inner, r, angles[i], angles[i + 1])}"/>`).join('');
});

document.querySelectorAll('.legend').forEach(ul => {
  ul.innerHTML = COLORS.map((c, i) =>
    `<li><svg style="fill:${c[1]}"><use href="#i-${ul.dataset.mark}"/></svg>PS${i + 1}</li>`).join('');
});
```
